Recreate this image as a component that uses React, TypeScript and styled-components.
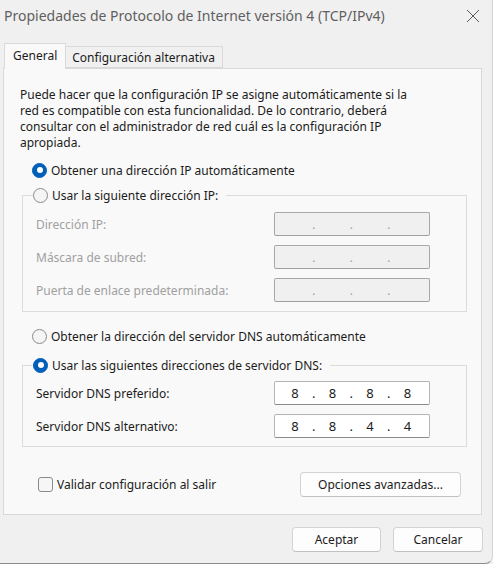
import React from "react";
import styled, { createGlobalStyle } from "styled-components";

const Global = createGlobalStyle`
  html, body { margin: 0; padding: 0; background: #f0f0f0; }
  * { box-sizing: border-box; }
`;

const FONT = `"Noto Sans", "Open Sans", sans-serif`;

const Window = styled.div`
  width: 493px;
  height: 564px;
  background: #f0f0f0;
  font-family: ${FONT};
  font-size: 12px;
  color: #1b1b1b;
  display: flex;
  flex-direction: column;
  border-bottom: 1px solid #8c8c8c;
  border-right: 1px solid #d4d4d4;
  border-bottom-right-radius: 8px;
  overflow: hidden;
`;

const TitleBar = styled.div`
  height: 31px;
  display: flex;
  align-items: center;
  justify-content: space-between;
  padding: 0 12px 0 4px;
`;

const Title = styled.div`
  font-size: 14px;
  color: #5f5f5f;
  white-space: nowrap;
`;

const CloseIcon = styled.svg`
  width: 14px;
  height: 14px;
  display: block;
`;

const TabRow = styled.div`
  display: flex;
  align-items: flex-end;
  padding: 12px 0 0 4px;
  position: relative;
  z-index: 1;
`;

const Tab = styled.div<{ $active?: boolean }>`
  height: ${(p) => (p.$active ? 26 : 22)}px;
  padding: ${(p) => (p.$active ? "0 8px 2px 8px" : "0 7px 0 6px")};
  display: flex;
  align-items: center;
  background: ${(p) => (p.$active ? "#f9f9f9" : "#f0f0f0")};
  border: 1px solid #d9d9d9;
  border-bottom: ${(p) => (p.$active ? "none" : "1px solid #d9d9d9")};
  border-left: ${(p) => (p.$active ? "1px solid #d9d9d9" : "none")};
  margin-bottom: ${(p) => (p.$active ? "-1px" : "0")};
  white-space: nowrap;
  color: #1b1b1b;
`;

const Panel = styled.div`
  margin: 0 10px 0 3px;
  height: 447px;
  background: #f9f9f9;
  border: 1px solid #d9d9d9;
  padding: 18px 14px 0 16px;
  display: flex;
  flex-direction: column;
`;

const Paragraph = styled.div`
  line-height: 16px;
  white-space: nowrap;
`;

const RadioRow = styled.label<{ $mt?: number }>`
  display: flex;
  align-items: center;
  gap: 4px;
  height: 18px;
  margin-top: ${(p) => p.$mt ?? 0}px;
  padding-left: ${(p) => (p.$mt !== undefined ? 12 : 0)}px;
  white-space: nowrap;
`;

const RadioDot = styled.span<{ $checked?: boolean }>`
  width: 15px;
  height: 15px;
  border-radius: 50%;
  flex: none;
  display: flex;
  align-items: center;
  justify-content: center;
  background: ${(p) => (p.$checked ? "#005fb8" : "#f5f5f5")};
  border: 1px solid ${(p) => (p.$checked ? "#005fb8" : "#8a8a8a")};
  &::after {
    content: "";
    display: ${(p) => (p.$checked ? "block" : "none")};
    width: 6px;
    height: 6px;
    border-radius: 50%;
    background: #ffffff;
  }
`;

const Group = styled.fieldset<{ $mt: number; $pb: number }>`
  margin: ${(p) => p.$mt}px 0 0 2px;
  border: 1px solid #dcdcdc;
  padding: 0 36px ${(p) => p.$pb}px 13px;
  min-width: 0;
`;

const Legend = styled.legend`
  padding: 0 8px 0 0;
  margin-left: -3px;
`;

const Rows = styled.div<{ $pt: number }>`
  display: flex;
  flex-direction: column;
  gap: 9px;
  padding-top: ${(p) => p.$pt}px;
`;

const FieldRow = styled.div<{ $disabled?: boolean }>`
  display: flex;
  align-items: center;
  justify-content: space-between;
  color: ${(p) => (p.$disabled ? "#a0a0a0" : "#1b1b1b")};
  white-space: nowrap;
`;

const IpBox = styled.div<{ $disabled?: boolean }>`
  width: 156px;
  height: 24px;
  border: 1px solid ${(p) => (p.$disabled ? "#a8a8a8" : "#b4b4b4")};
  border-bottom-color: ${(p) => (p.$disabled ? "#a0a0a0" : "#8a8a8a")};
  border-radius: 2px;
  background: ${(p) => (p.$disabled ? "#f0f0f0" : "#ffffff")};
  display: grid;
  grid-template-columns: 30px 7.5px 30px 7.5px 30px 7.5px 30px;
  padding-left: 5px;
  align-items: center;
  font-size: 13px;
  color: ${(p) => (p.$disabled ? "#a0a0a0" : "#1b1b1b")};
`;

const Cell = styled.span`
  text-align: center;
  line-height: 22px;
`;

const Dot = styled.span<{ $disabled?: boolean }>`
  text-align: center;
  line-height: 22px;
  color: ${(p) => (p.$disabled ? "#a8a8b8" : "#1b1b1b")};
`;

const Footer = styled.div`
  display: flex;
  align-items: center;
  justify-content: space-between;
  margin-top: 25px;
  padding: 0 6px 0 18px;
`;

const CheckRow = styled.label`
  display: flex;
  align-items: center;
  gap: 4px;
  white-space: nowrap;
`;

const CheckBox = styled.span`
  width: 15px;
  height: 15px;
  border-radius: 3px;
  border: 1px solid #8a8a8a;
  background: #f6f6f6;
  flex: none;
`;

const Button = styled.button<{ $w: number }>`
  width: ${(p) => p.$w}px;
  height: 25px;
  font-family: ${FONT};
  font-size: 12px;
  color: #1b1b1b;
  background: #fdfdfd;
  border: 1px solid #d3d3d3;
  border-bottom-color: #c0c0c0;
  border-radius: 4px;
  padding: 0;
`;

const BottomBar = styled.div`
  display: flex;
  justify-content: flex-end;
  gap: 12px;
  padding: 12px 9px 0 0;
`;

function Ip({ values, disabled }: { values: string[]; disabled?: boolean }) {
  const parts: React.ReactNode[] = [];
  values.forEach((v, i) => {
    parts.push(<Cell key={`c${i}`}>{v}</Cell>);
    if (i < 3)
      parts.push(
        <Dot key={`d${i}`} $disabled={disabled}>
          .
        </Dot>
      );
  });
  return <IpBox $disabled={disabled}>{parts}</IpBox>;
}

export default function App() {
  return (
    <>
      <Global />
      <Window>
        <TitleBar>
          <Title>Propiedades de Protocolo de Internet versión 4 (TCP/IPv4)</Title>
          <CloseIcon viewBox="0 0 14 14">
            <path d="M1 1 L13 13 M13 1 L1 13" stroke="#5a5a5a" strokeWidth="1" fill="none" />
          </CloseIcon>
        </TitleBar>
        <TabRow>
          <Tab $active>General</Tab>
          <Tab>Configuración alternativa</Tab>
        </TabRow>
        <Panel>
          <Paragraph>
            Puede hacer que la configuración IP se asigne automáticamente si la
            <br />
            red es compatible con esta funcionalidad. De lo contrario, deberá
            <br />
            consultar con el administrador de red cuál es la configuración IP
            <br />
            apropiada.
          </Paragraph>
          <RadioRow $mt={10}>
            <RadioDot $checked />
            Obtener una dirección IP automáticamente
          </RadioRow>
          <Group $mt={7} $pb={9}>
            <Legend>
              <RadioRow>
                <RadioDot />
                Usar la siguiente dirección IP:
              </RadioRow>
            </Legend>
            <Rows $pt={8}>
              <FieldRow $disabled>
                Dirección IP:
                <Ip values={["", "", "", ""]} disabled />
              </FieldRow>
              <FieldRow $disabled>
                Máscara de subred:
                <Ip values={["", "", "", ""]} disabled />
              </FieldRow>
              <FieldRow $disabled>
                Puerta de enlace predeterminada:
                <Ip values={["", "", "", ""]} disabled />
              </FieldRow>
            </Rows>
          </Group>
          <RadioRow $mt={15}>
            <RadioDot />
            Obtener la dirección del servidor DNS automáticamente
          </RadioRow>
          <Group $mt={11} $pb={8}>
            <Legend>
              <RadioRow>
                <RadioDot $checked />
                Usar las siguientes direcciones de servidor DNS:
              </RadioRow>
            </Legend>
            <Rows $pt={7}>
              <FieldRow>
                Servidor DNS preferido:
                <Ip values={["8", "8", "8", "8"]} />
              </FieldRow>
              <FieldRow>
                Servidor DNS alternativo:
                <Ip values={["8", "8", "4", "4"]} />
              </FieldRow>
            </Rows>
          </Group>
          <Footer>
            <CheckRow>
              <CheckBox />
              Validar configuración al salir
            </CheckRow>
            <Button $w={161}>Opciones avanzadas...</Button>
          </Footer>
        </Panel>
        <BottomBar>
          <Button $w={89}>Aceptar</Button>
          <Button $w={90}>Cancelar</Button>
        </BottomBar>
      </Window>
    </>
  );
}
